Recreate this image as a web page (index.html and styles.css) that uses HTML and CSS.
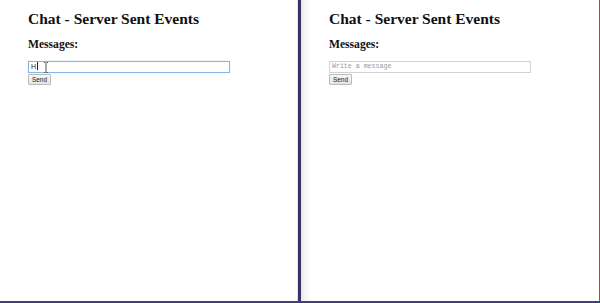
FILE: index.html
```html
<!DOCTYPE html>
<html lang="en">
<head>
    <meta charset="UTF-8">
    <title>Chat - Server Sent Events</title>
    <link rel="stylesheet" href="styles.css">
</head>
<body>
    <div class="screen">
        <div class="pane pane-left">
            <h1>Chat - Server Sent Events</h1>
            <h2>Messages:</h2>
            <div class="field">
                <div class="message-input focused">H<span class="caret"></span></div>
                <svg class="ibeam" width="6" height="11" viewBox="0 0 6 11">
                    <path d="M1 0.5h1.5M3.5 0.5h1.5M3 1v9M1 10.5h1.5M3.5 10.5h1.5" stroke="#555" stroke-width="1" fill="none"/>
                </svg>
            </div>
            <button class="send">Send</button>
        </div>
        <div class="divider"></div>
        <div class="pane pane-right">
            <h1>Chat - Server Sent Events</h1>
            <h2>Messages:</h2>
            <div class="field">
                <div class="message-input placeholder">Write a message</div>
            </div>
            <button class="send">Send</button>
        </div>
    </div>
</body>
</html>
```

FILE: styles.css
```css
body {
    margin: 0;
    padding: 0;
    background-color: #fff;
    font-family: "Liberation Serif", "Times New Roman", serif;
}

.screen {
    display: flex;
    width: 600px;
    height: 303px;
    box-sizing: border-box;
    border-bottom: 2px solid #4b3b72;
}

.pane {
    padding: 10px 0 0 28px;
    box-sizing: border-box;
}

.pane-left {
    width: 298px;
    border-right: 1px solid #e2e2e8;
}

.divider {
    width: 3px;
    background-color: #3b3163;
}

.pane-right {
    flex: 1;
    background: linear-gradient(to right, #e6e6e6, #f6f6f6 4px, #fff 12px);
    border-right: 1px solid #c23d5c;
}

h1 {
    margin: 0;
    font-size: 15.5px;
    line-height: 18px;
    font-weight: bold;
    color: #111;
}

h2 {
    margin: 10px 0 0;
    font-size: 11.6px;
    line-height: 14px;
    font-weight: bold;
    color: #111;
}

.field {
    position: relative;
    margin-top: 9px;
}

.message-input {
    width: 202px;
    height: 12px;
    box-sizing: border-box;
    border: 1px solid #d2d2d2;
    font-family: "Liberation Sans", Arial, sans-serif;
    font-size: 7px;
    line-height: 10px;
    padding-left: 2px;
    color: #222;
}

.focused {
    border-color: #88b9e4;
    box-shadow: 0 0 1px #a8cdf0;
}

.placeholder {
    font-family: "Liberation Mono", "Courier New", monospace;
    font-size: 6.6px;
    color: #9a9a9a;
}

.caret {
    display: inline-block;
    width: 1px;
    height: 8px;
    margin-left: 1px;
    vertical-align: -1px;
    background-color: #222;
}

.ibeam {
    position: absolute;
    left: 15px;
    top: 1px;
}

.send {
    display: block;
    margin-top: 1px;
    width: 23px;
    height: 11px;
    padding: 0;
    border: 1px solid #bcbcbc;
    border-radius: 1px;
    background: linear-gradient(#f7f7f7, #e4e4e4);
    font-family: "Liberation Sans", Arial, sans-serif;
    font-size: 6.4px;
    line-height: 9px;
    color: #222;
}
```
